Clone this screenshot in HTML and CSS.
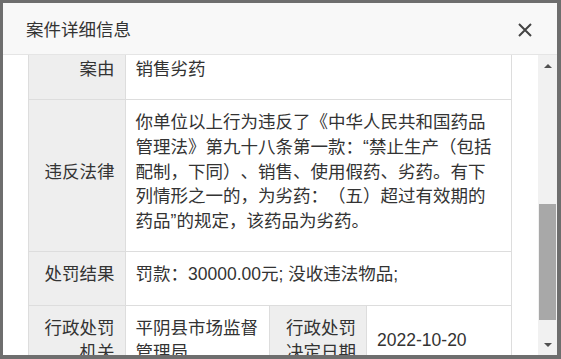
FILE: index.html
```html
<!DOCTYPE html>
<html>
  <head>
    <title>案件详细信息</title>
    <meta charset="utf-8" />
    <meta name="viewport" content="width=device-width, initial-scale=1" />
    <link rel="stylesheet" href="styles.css">
  </head>
  <body>
    <!-- Case detail dialog -->
    <div class="dialog">
      <div class="dialog-header">
        <span class="dialog-title">案件详细信息</span>
        <svg class="dialog-close" width="16" height="16" viewBox="0 0 16 16">
          <path d="M2 2 L14 14 M14 2 L2 14" stroke="#444" stroke-width="2" fill="none" />
        </svg>
      </div>
      <div class="dialog-main">
        <div class="dialog-body">
          <table class="detail">
            <colgroup>
              <col class="col-label" />
              <col class="col-value" />
              <col class="col-label" />
              <col class="col-value" />
            </colgroup>
            <tr>
              <th>案由</th>
              <td colspan="3">销售劣药</td>
            </tr>
            <tr>
              <th>违反法律</th>
              <td colspan="3" class="wide">你单位以上行为违反了《中华人民共和国药品管理法》第九十八条第一款：“禁止生产（包括配制，下同）、销售、使用假药、劣药。有下列情形之一的，为劣药：（五）超过有效期的药品”的规定，该药品为劣药。</td>
            </tr>
            <tr>
              <th>处罚结果</th>
              <td colspan="3">罚款：30000.00元; 没收违法物品;</td>
            </tr>
            <tr>
              <th>行政处罚机关</th>
              <td>平阴县市场监督管理局</td>
              <th>行政处罚决定日期</th>
              <td>2022-10-20</td>
            </tr>
          </table>
        </div>
        <div class="scrollbar">
          <div class="sb-btn"><span class="arrow-up"></span></div>
          <div class="sb-track"><div class="sb-thumb"></div></div>
          <div class="sb-btn"><span class="arrow-down"></span></div>
        </div>
      </div>
    </div>
  </body>
</html>
```

FILE: styles.css
```css
html,
body {
  height: 359px;
}

body {
  margin: 0;
  box-sizing: border-box;
  padding: 3px 4px 4px 3px;
  background: #6e6e6e;
  color: #333;
  font-family: "Liberation Sans", "Noto Sans CJK SC", sans-serif;
  font-size: 17.5px;
  text-spacing-trim: space-all;
  overflow: hidden;
}

.dialog {
  height: 100%;
  background: #fff;
  display: flex;
  flex-direction: column;
  overflow: hidden;
}

.dialog-header {
  background: #f8f8f8;
  border-bottom: 1px solid #e5e5e5;
  padding: 15px 24px 11.5px 23px;
  display: flex;
  justify-content: space-between;
  align-items: center;
  line-height: 24.5px;
}

.dialog-title {
  color: #333;
}

.dialog-close {
  display: block;
}

.dialog-main {
  flex: 1;
  min-height: 0;
  display: flex;
}

.dialog-body {
  flex: 1;
  overflow: hidden;
  padding: 0 26px 0 25px;
}

.detail {
  width: 100%;
  margin-top: -9.25px;
  border-collapse: collapse;
  table-layout: fixed;
  line-height: 24.75px;
}

.col-label {
  width: 20%;
}

.col-value {
  width: 30%;
}

.detail th,
.detail td {
  border: 1px solid #ddd;
  padding: 10px 10px 17.5px;
  vertical-align: middle;
}

.detail th {
  background: #eee;
  font-weight: normal;
  text-align: right;
}

.detail td {
  text-align: left;
}

.detail td.wide {
  padding-right: 15px;
}

/* fake scrollbar */
.scrollbar {
  width: 19px;
  background: #f1f1f1;
  display: flex;
  flex-direction: column;
}

.sb-btn {
  height: 21px;
  display: flex;
  align-items: center;
  justify-content: center;
}

.arrow-up {
  width: 0;
  height: 0;
  border-left: 4px solid transparent;
  border-right: 4px solid transparent;
  border-bottom: 4px solid #505050;
}

.arrow-down {
  width: 0;
  height: 0;
  border-left: 4px solid transparent;
  border-right: 4px solid transparent;
  border-top: 4px solid #505050;
}

.sb-track {
  flex: 1;
}

.sb-thumb {
  margin: 128px 1px 0;
  height: 116px;
  background: #a8a8a8;
}
```
